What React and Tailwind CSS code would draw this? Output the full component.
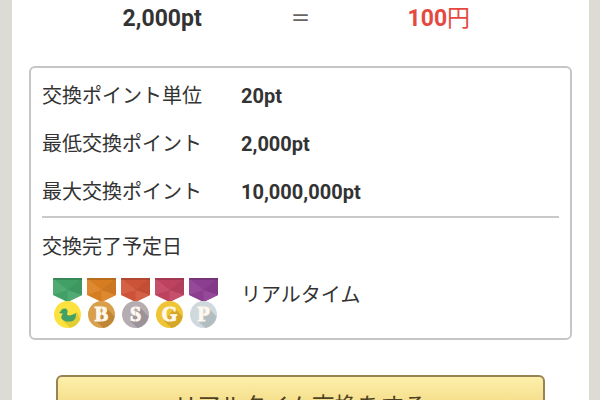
const ROWS = [
  { label: '交換ポイント単位', value: '20pt' },
  { label: '最低交換ポイント', value: '2,000pt' },
  { label: '最大交換ポイント', value: '10,000,000pt' },
];

const MEDALS = [
  { id: 'duck', ribbon: '#41a066', light: '#50aa72', disc: '#fbe23f', shade: '#e3cd35' },
  { id: 'B', ribbon: '#d67d22', light: '#dd8930', disc: '#d9a04c', shade: '#bf8538' },
  { id: 'S', ribbon: '#cd5338', light: '#d46146', disc: '#b5adb2', shade: '#9b9399' },
  { id: 'G', ribbon: '#bd4260', light: '#c6506c', disc: '#f0c535', shade: '#d5a729' },
  { id: 'P', ribbon: '#8b3d8f', light: '#964999', disc: '#cfd8dc', shade: '#b2bdc2' },
];

function Medal({ id, ribbon, light, disc, shade }) {
  return (
    <svg viewBox="0 0 29 50" className="h-[50px] w-[29px] shrink-0" role="img" aria-label={id}>
      <path d="M0 0H29V17L14.5 24L0 17Z" fill={ribbon} />
      <path d="M0 0L14.5 12L0 17ZM14.5 12L29 17L14.5 24Z" fill={light} />
      <path d="M14.5 12L29 0V17Z" fill="#000" opacity="0.05" />
      <path d="M0 0H29V2H0Z" fill="#000" opacity="0.14" />
      <circle cx="14.5" cy="36.5" r="13.5" fill={disc} />
      {id === 'duck' ? (
        <>
          <path d="M24 34L27.2 41A13.5 13.5 0 0 1 17 49.8L10 43Z" fill={shade} />
          <path
            d="M6 34.2C7.4 33.8 8 33.4 8.2 32.6C8.9 30.2 13.4 29.7 14.5 32.4C15.2 34.2 13.5 35.8 14.2 36.8C16 38.4 19.5 36.9 22.8 35.2C23.5 40 21.4 43.4 16.5 43.6C11.6 43.8 8 41.9 8.3 38.8C8.5 37.2 9.8 36.2 9.7 35.4C8.7 35.7 7.2 35.4 6 34.2Z"
            fill="#41a066"
          />
        </>
      ) : (
        <>
          <path d="M19.5 30L27.5 38.5A13.5 13.5 0 0 1 16.5 49.9L9 43Z" fill={shade} />
          <text
            x="14.5"
            y="43"
            textAnchor="middle"
            fill="#fff8ee"
            stroke="#fff8ee"
            strokeWidth="1"
            className="font-['Liberation_Serif',serif] text-[20px] font-bold"
          >
            {id}
          </text>
          {/* stencil cut */}
          <path d="M14.5 29V44" stroke={disc} strokeWidth="0.7" opacity="0.6" />
        </>
      )}
    </svg>
  );
}

export default function App() {
  return (
    <div className="min-h-screen bg-[#dddcd4] pr-[11px] pl-3 font-[Roboto,'Noto_Sans_CJK_JP',sans-serif] text-[#333]">
      <main className="min-h-screen bg-white px-[17px] pb-10">
        <div className="grid grid-cols-3 items-center px-16 pt-[5px] text-center text-[23px] leading-7">
          <span className="font-bold">2,000pt</span>
          <span className="text-xl leading-6 font-medium text-[#666]">＝</span>
          <span className="text-[#e5483f]">
            <b>100</b>円
          </span>
        </div>

        <section className="mt-[33px] rounded-md border-2 border-[#c6c6c6] px-[11px] pt-1 pb-[10px] text-xl">
          <dl className="border-b-2 border-[#c9c9c9]">
            {ROWS.map(({ label, value }) => (
              <div key={label} className="flex h-12 items-center">
                <dt className="w-[199px]">{label}</dt>
                <dd className="font-bold">{value}</dd>
              </div>
            ))}
          </dl>
          <h2 className="mt-[13px] leading-8">交換完了予定日</h2>
          <div className="mt-[15px] flex items-center">
            <div className="flex w-[199px] gap-[5px] pl-[11px]">
              {MEDALS.map((medal) => (
                <Medal key={medal.id} {...medal} />
              ))}
            </div>
            <p className="pb-4">リアルタイム</p>
          </div>
        </section>

        <div className="mt-[35px] px-[27px]">
          <button
            type="button"
            className="h-16 w-full rounded-md border-2 border-[#988353] bg-linear-to-b from-[#fdf0ab] to-[#e9c65a] text-[23px] text-[#4d4222]"
          >
            リアルタイム交換をする
          </button>
        </div>
      </main>
    </div>
  );
}
